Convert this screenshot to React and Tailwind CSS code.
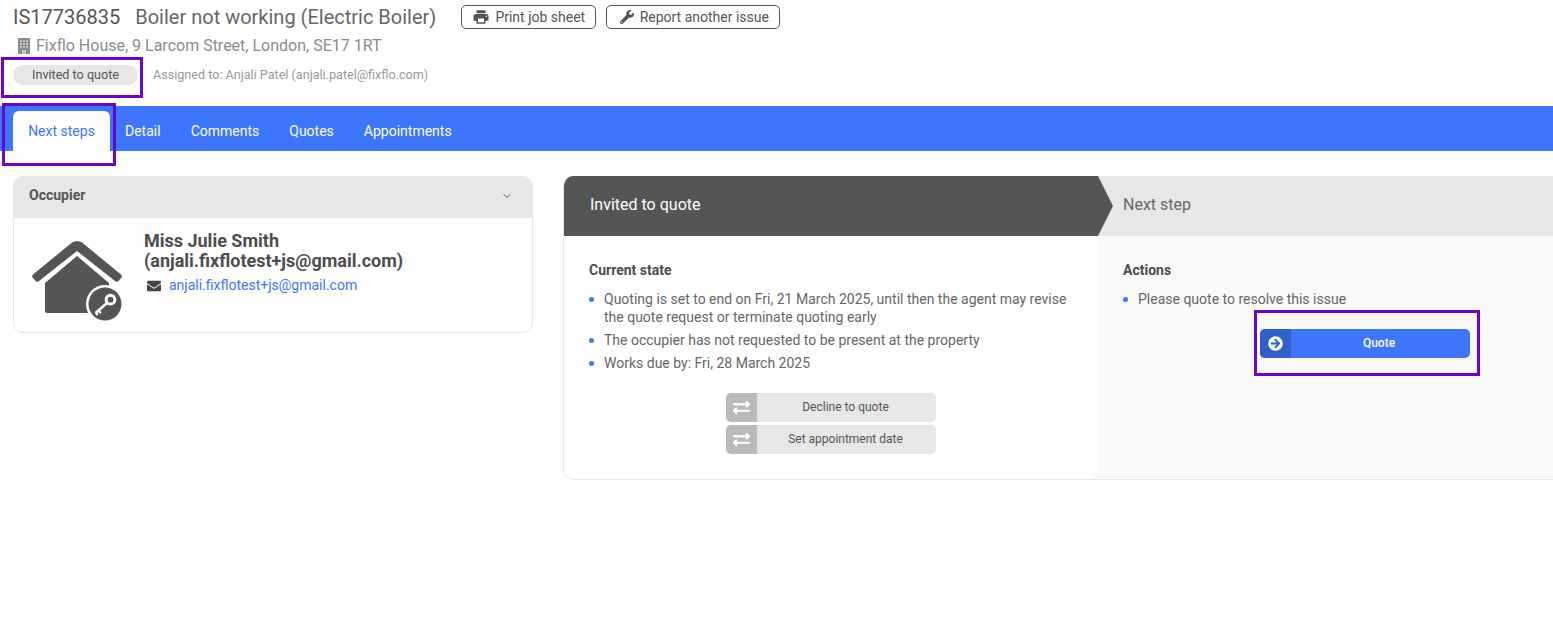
import React from 'react';
import { FaWrench, FaEnvelope, FaExchangeAlt, FaArrowCircleRight } from 'react-icons/fa';
import { MdPrint } from 'react-icons/md';
import { ChevronDown } from 'lucide-react';

const tabs = ['Detail', 'Comments', 'Quotes', 'Appointments'];

const currentState = [
  'Quoting is set to end on Fri, 21 March 2025, until then the agent may revise the quote request or terminate quoting early',
  'The occupier has not requested to be present at the property',
  'Works due by: Fri, 28 March 2025',
];

const HouseKeyIcon = () => (
  <svg viewBox="0 0 92 84" className="h-[84px] w-[92px]">
    <path d="M2 33.5 L41 1.5 Q46 -1.5 51 1.5 L90 33.5 Q91.5 35 90.5 36.5 L87.5 40 Q86 41.5 84 40 L46 10 L8 40 Q6 41.5 4.5 40 L1.5 36.5 Q0.5 35 2 33.5 Z" fill="#555" />
    <path d="M14 42 L46 15 L78 42 L78 72 L16 72 Q14 72 14 70 Z" fill="#555" />
    <circle cx="74" cy="63" r="19" fill="#fff" />
    <circle cx="74" cy="63" r="16.5" fill="#555" />
    <circle cx="79.5" cy="58.7" r="4.4" fill="none" stroke="#fff" strokeWidth="3" />
    <path d="M76 62 L64.5 72 M67.5 69.5 L70 72.2 M64.8 71.8 L66.6 74" stroke="#fff" strokeWidth="2.4" fill="none" />
  </svg>
);

const BuildingIcon = () => (
  <svg viewBox="0 0 12 16" className="mr-[6px] h-[16px] w-[12px]">
    <rect width="12" height="16" fill="#8c8c8c" />
    <path d="M2 2h2v2H2zM5 2h2v2H5zM8 2h2v2H8zM2 5h2v2H2zM5 5h2v2H5zM8 5h2v2H8zM2 8h2v2H2zM5 8h2v2H5zM8 8h2v2H8zM4 12h4v4H4z" fill="#c4c4c4" />
  </svg>
);

const GreyAction = ({ label }) => (
  <button className="flex h-[29px] w-[210px] overflow-hidden rounded-[5px] bg-[#e7e7e7] text-[12px] text-[#555]">
    <span className="flex h-full w-[31px] items-center justify-center bg-[#bababa] text-white">
      <FaExchangeAlt size={17} />
    </span>
    <span className="flex-1 self-center pb-[1px] pr-[2px] text-center">{label}</span>
  </button>
);

export default function App() {
  return (
    <div className="relative h-[626px] w-[1553px] overflow-hidden bg-white font-['Roboto',sans-serif] text-[#555]">
      {/* cabecera */}
      <div className="h-[106px] pl-[13px]">
        <div className="flex h-[33px] items-center">
          <span className="text-[20px] leading-none">IS17736835</span>
          <span className="ml-[15px] text-[20px] leading-none text-[#666]">Boiler not working (Electric Boiler)</span>
          <button className="ml-[25px] flex h-[24px] w-[135px] items-center justify-center gap-[5px] rounded-[5px] border border-[#555] pt-[1px] text-[14px]">
            <MdPrint size={18} /> Print job sheet
          </button>
          <button className="ml-[10px] flex h-[24px] w-[174px] items-center justify-center gap-[6px] rounded-[5px] border border-[#555] pl-[2px] pt-[1px] text-[14px]">
            <FaWrench size={14} /> Report another issue
          </button>
        </div>
        <div className="mt-[2px] flex h-[22px] items-center pl-[5px] text-[16px] text-[#8c8c8c]">
          <BuildingIcon />
          Fixflo House, 9 Larcom Street, London, SE17 1RT
        </div>
        <div className="mt-[8px] flex items-center">
          <span className="flex h-[20px] w-[125px] items-center justify-center rounded-full bg-[#e7e7e7] text-[12.6px] text-[#555]">
            Invited to quote
          </span>
          <span className="ml-[15px] text-[12.6px] text-[#999]">Assigned to: Anjali Patel (anjali.patel@fixflo.com)</span>
        </div>
      </div>

      {/* pestañas */}
      <div className="flex h-[45px] items-end bg-[#3d76fb] pl-[13px] text-[14px] text-white">
        <div className="flex h-[40px] w-[97px] items-center justify-center rounded-t-[6px] bg-white text-[#3d76fb]">
          Next steps
        </div>
        {tabs.map((tab) => (
          <div key={tab} className="flex h-[40px] items-center px-[15px]">
            {tab}
          </div>
        ))}
      </div>

      <div className="flex items-start gap-[30px] pl-[13px] pt-[25px]">
        {/* ocupante */}
        <div className="h-[157px] w-[520px] shrink-0 overflow-hidden rounded-[10px] border border-[#e7e7e7]">
          <div className="flex h-[41px] items-center justify-between bg-[#e7e7e7] pb-[4px] pl-[15px] pr-[19px] text-[14px] font-bold">
            Occupier
            <ChevronDown size={12} strokeWidth={2} />
          </div>
          <div className="flex pl-[17px] pt-[21px]">
            <div className="mt-[2px]">
              <HouseKeyIcon />
            </div>
            <div className="-mt-[8px] ml-[21px]">
              <div className="text-[18px] font-bold leading-[20px] text-[#4d4d4d]">
                Miss Julie Smith
                <br />
                (anjali.fixflotest+js@gmail.com)
              </div>
              <div className="mt-[4px] flex items-center pl-[3px] text-[14px] text-[#3d76fb]">
                <FaEnvelope size={14} className="mr-[8px] text-[#444]" />
                anjali.fixflotest+js@gmail.com
              </div>
            </div>
          </div>
        </div>

        {/* flujo */}
        <div className="flex h-[304px] w-[990px] shrink-0 overflow-hidden rounded-l-[10px] border-b border-l border-[#e7e7e7] bg-[#f9f9f9]">
          <div className="w-[534px] shrink-0 rounded-br-[10px] bg-white">
            <div className="flex h-[60px] items-center bg-[#555] pb-[2px] pl-[26px] text-[16px] text-white">
              Invited to quote
            </div>
            <div className="px-[25px] pt-[26px] text-[14px] text-[#666]">
              <div className="font-bold leading-[17px] text-[#4d4d4d]">Current state</div>
              <ul className="mt-[11px]">
                {currentState.map((item) => (
                  <li key={item} className="mb-[5px] flex leading-[18px]">
                    <span className="mr-[10px] mt-[7px] h-[5px] w-[5px] shrink-0 rounded-full bg-[#3d76fb]" />
                    <span className="w-[480px]">{item}</span>
                  </li>
                ))}
              </ul>
              <div className="mt-[21px] flex flex-col items-center gap-[3px]">
                <GreyAction label="Decline to quote" />
                <GreyAction label="Set appointment date" />
              </div>
            </div>
          </div>

          <div className="relative flex-1">
            <div className="flex h-[60px] items-center bg-[#e7e7e7] pb-[2px] pl-[25px] text-[16px] text-[#666]">Next step</div>
            <div className="absolute left-0 top-0 h-[60px] w-[15px] bg-[#555] [clip-path:polygon(0_0,100%_50%,0_100%)]" />
            <div className="pl-[25px] pt-[26px] text-[14px] text-[#666]">
              <div className="font-bold leading-[17px] text-[#4d4d4d]">Actions</div>
              <div className="mt-[11px] flex leading-[18px]">
                <span className="mr-[10px] mt-[7px] h-[5px] w-[5px] rounded-full bg-[#3d76fb]" />
                Please quote to resolve this issue
              </div>
              <button className="ml-[137px] mt-[21px] flex h-[29px] w-[210px] overflow-hidden rounded-[5px] bg-[#3d76fb] text-[12px] font-medium text-white">
                <span className="flex h-full w-[31px] items-center justify-center bg-[#315fc9]">
                  <FaArrowCircleRight size={15} />
                </span>
                <span className="flex-1 self-center pb-[1px] pr-[3px] text-center">Quote</span>
              </button>
            </div>
          </div>
        </div>
      </div>

      {/* marcas de anotación sobre la captura */}
      <div className="absolute left-[1px] top-[57px] h-[41px] w-[142px] border-[3px] border-[#6a06c9]" />
      <div className="absolute left-[2px] top-[103px] h-[63px] w-[114px] border-[3px] border-[#6a06c9]" />
      <div className="absolute left-[1254px] top-[310px] h-[66px] w-[226px] border-[3px] border-[#6a06c9]" />
    </div>
  );
}
